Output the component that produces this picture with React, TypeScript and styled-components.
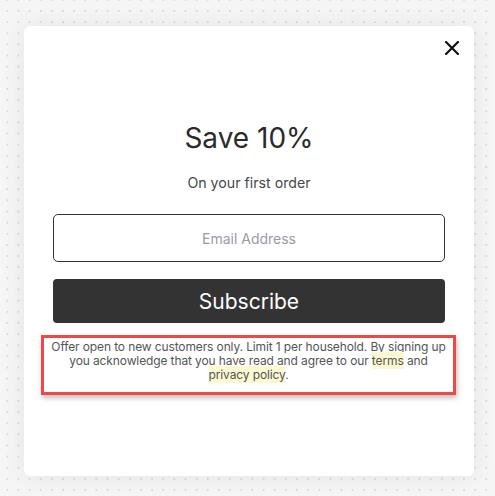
import styled, { createGlobalStyle } from 'styled-components';

const GlobalStyle = createGlobalStyle`
  html, body {
    margin: 0;
    padding: 0;
  }
  body {
    font-family: Inter, "Noto Sans", sans-serif;
    background-color: #f5f5f5;
    background-image: radial-gradient(circle, #dadada 0.8px, transparent 1.2px);
    background-size: 11.15px 11.15px;
    background-position: 1.7px 5.4px;
  }
`;

const App = () => {
  return (
    <>
      <GlobalStyle />
      <Page>
        <Modal>
          <TopBar>
            <CloseButton aria-label="Close">
              <svg width="14" height="14" viewBox="0 0 14 14">
                <path d="M1 1L13 13M13 1L1 13" stroke="#111" strokeWidth="2.2" strokeLinecap="square" />
              </svg>
            </CloseButton>
          </TopBar>

          <Content>
            <Title>Save 10%</Title>
            <Subtitle>On your first order</Subtitle>
            <EmailInput type="email" placeholder="Email Address" />
            <SubscribeButton>Subscribe</SubscribeButton>
            <Disclaimer>
              Offer open to new customers only. Limit 1 per household. By signing up you
              acknowledge that you have read and agree to our <Mark>terms</Mark> and{' '}
              <Mark>privacy policy</Mark>.
            </Disclaimer>
          </Content>
        </Modal>
      </Page>
    </>
  );
};

const Page = styled.div`
  width: 495px;
  height: 496px;
  padding: 26px 0 0 24px;
  box-sizing: border-box;
`;
const Modal = styled.div`
  width: 450px;
  height: 450px;
  box-sizing: border-box;
  padding: 15px;
  background: #fff;
  border-radius: 6px;
  box-shadow: 0 0 22px rgba(0, 0, 0, 0.07);
  display: flex;
  flex-direction: column;
`;
const TopBar = styled.div`
  display: flex;
  justify-content: flex-end;
  height: 14px;
`;
const CloseButton = styled.button`
  width: 14px;
  height: 14px;
  padding: 0;
  border: 0;
  background: none;
  cursor: pointer;
  display: flex;
`;
const Content = styled.div`
  padding: 0 14px;
  display: flex;
  flex-direction: column;
  align-items: stretch;
`;
const Title = styled.h1`
  margin: 66px 0 0;
  font-size: 28px;
  line-height: 34px;
  font-weight: 400;
  color: #2b2b2b;
  text-align: center;
`;
const Subtitle = styled.p`
  margin: 19px 0 0;
  font-size: 14.2px;
  line-height: 18px;
  color: #474747;
  text-align: center;
`;
const EmailInput = styled.input`
  margin-top: 22px;
  height: 48px;
  box-sizing: border-box;
  border: 1px solid #333;
  border-radius: 5px;
  font-family: inherit;
  font-size: 14px;
  text-align: center;
  outline: none;
  &::placeholder {
    color: #9b9ba6;
  }
`;
const SubscribeButton = styled.button`
  margin-top: 17px;
  height: 44px;
  border: 0;
  border-radius: 4px;
  background: #333;
  color: #fff;
  font-family: inherit;
  font-size: 21px;
  cursor: pointer;
`;
const Disclaimer = styled.p`
  margin: 12px -11px 0 -12px;
  padding: 2px 4px 10px;
  border: 3px solid #f04848;
  box-shadow: 1px 3px 5px rgba(0, 0, 0, 0.25);
  font-size: 12px;
  line-height: 14px;
  letter-spacing: -0.12px;
  color: #555;
  text-align: center;
`;
const Mark = styled.span`
  background: #fcf8d2;
  padding: 1px 0;
`;

export default App;
